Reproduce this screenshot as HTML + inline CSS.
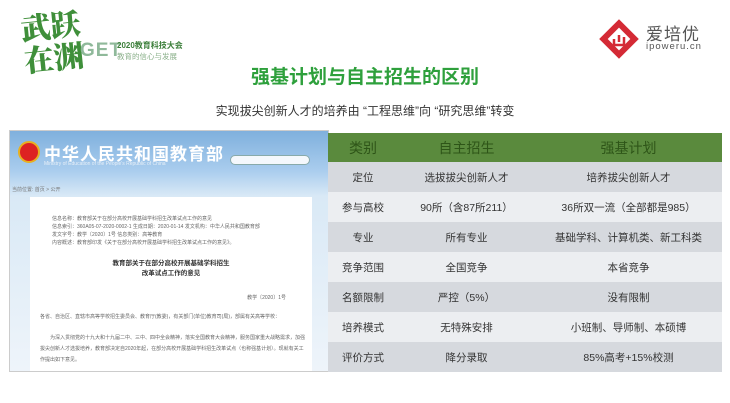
<!DOCTYPE html>
<html><head><meta charset="utf-8"><style>
*{margin:0;padding:0;box-sizing:border-box}
body{width:730px;height:403px;background:#fff;position:relative;overflow:hidden;font-family:"Liberation Sans","Noto Sans CJK SC",sans-serif}
.abs{position:absolute}
table{border-collapse:collapse;position:absolute;left:328px;top:133px;width:394px;font-size:10.5px;color:#333}
td{text-align:center;height:30px;padding:0}
tr.h td{background:#5a8a3d;color:#2e5518;font-size:14px;height:29px}
tr.d td{background:#d6d9de}
tr.l td{background:#eceef1}
</style></head><body>
<!-- logo left -->
<div class="abs" style="left:22px;top:8px;font-family:'Noto Serif CJK SC',serif;font-weight:900;color:#3f8f3a;font-size:30px;line-height:32px;transform:rotate(-6deg)">武跃<br>在渊</div>
<div class="abs" style="left:80px;top:40px;font-weight:bold;color:#8fb99a;font-size:19px;letter-spacing:1px">GET</div>
<div class="abs" style="left:117px;top:40px;font-size:8px;color:#3c7f3a;font-weight:bold">2020教育科技大会</div>
<div class="abs" style="left:117px;top:51px;font-size:7.5px;color:#8ab08a">教育的信心与发展</div>
<!-- logo right -->
<svg class="abs" style="left:597px;top:17px" width="44" height="44" viewBox="0 0 44 44"><rect x="8" y="8" width="28" height="28" transform="rotate(45 22 22)" fill="#d42a35"/><rect x="14" y="14" width="16" height="16" transform="rotate(45 22 22)" fill="#fff"/><path d="M17 22v6h10v-8M22 18v7" stroke="#d42a35" stroke-width="2.5" fill="none"/></svg>
<div class="abs" style="left:646px;top:20px;font-size:17px;color:#555;letter-spacing:1px">爱培优</div>
<div class="abs" style="left:646px;top:41px;font-size:9.5px;color:#555;letter-spacing:1px">ipoweru.cn</div>
<!-- titles -->
<div class="abs" style="left:0;width:730px;top:62px;text-align:center;font-size:19px;font-weight:bold;color:#2ea03c">强基计划与自主招生的区别</div>
<div class="abs" style="left:0;width:730px;top:102px;text-align:center;font-size:12px;color:#333">实现拔尖创新人才的培养由 “工程思维”向 “研究思维”转变</div>
<!-- left document image -->
<div class="abs" style="left:9px;top:130px;width:320px;height:242px;border:1px solid #ccc;background:linear-gradient(#7fb0dd 0,#aacdee 40px,#d9e9f6 65px,#eef4fa 100%);overflow:hidden">
 <div class="abs" style="left:8px;top:10px;width:22px;height:22px;border-radius:50%;background:#d22;border:2px solid #e8b020"></div>
 <div class="abs" style="left:34px;top:9px;font-size:17px;font-weight:bold;color:#fff;letter-spacing:1px">中华人民共和国教育部</div>
 <div class="abs" style="left:34px;top:30px;font-size:5px;color:#e8f0f8">Ministry of Education of the People's Republic of China</div>
 <div class="abs" style="left:220px;top:24px;width:80px;height:10px;border-radius:5px;background:#f4f8fc;border:1px solid #8aa"></div>
 <div class="abs" style="left:2px;top:55px;font-size:5px;color:#777">当前位置: 首页 &gt; 公开</div>
 <div class="abs" style="left:20px;top:66px;width:282px;height:176px;background:#fff;font-size:5px;color:#666;line-height:8px">
  <div style="position:absolute;left:22px;top:18px">信息名称：教育部关于在部分高校开展基础学科招生改革试点工作的意见<br>信息索引：360A05-07-2020-0002-1 生成日期：2020-01-14 发文机构：中华人民共和国教育部<br>发文字号：教学〔2020〕1号 信息类别：高等教育<br>内容概述：教育部印发《关于在部分高校开展基础学科招生改革试点工作的意见》。</div>
  <div style="position:absolute;left:0;width:282px;top:62px;text-align:center;font-size:6.5px;color:#333;line-height:10px;font-weight:bold">教育部关于在部分高校开展基础学科招生<br>改革试点工作的意见</div>
  <div style="position:absolute;right:26px;top:97px">教学〔2020〕1号</div>
  <div style="position:absolute;left:10px;top:116px">各省、自治区、直辖市高等学校招生委员会、教育厅(教委)，有关部门(单位)教育司(局)，部属有关高等学校：</div>
  <div style="position:absolute;left:10px;top:136px;width:265px;line-height:11px">　　为深入贯彻党的十九大和十九届二中、三中、四中全会精神，落实全国教育大会精神，服务国家重大战略需求，加强拔尖创新人才选拔培养，教育部决定自2020年起，在部分高校开展基础学科招生改革试点（也称强基计划）。现就有关工作提出如下意见。</div>
 </div>
</div>
<table>
<tr class="h"><td style="width:70px">类别</td><td style="width:137px">自主招生</td><td>强基计划</td></tr>
<tr class="d"><td>定位</td><td>选拔拔尖创新人才</td><td>培养拔尖创新人才</td></tr>
<tr class="l"><td>参与高校</td><td>90所（含87所211）</td><td>36所双一流（全部都是985）</td></tr>
<tr class="d"><td>专业</td><td>所有专业</td><td>基础学科、计算机类、新工科类</td></tr>
<tr class="l"><td>竞争范围</td><td>全国竞争</td><td>本省竞争</td></tr>
<tr class="d"><td>名额限制</td><td>严控（5%）</td><td>没有限制</td></tr>
<tr class="l"><td>培养模式</td><td>无特殊安排</td><td>小班制、导师制、本硕博</td></tr>
<tr class="d"><td style="height:29px">评价方式</td><td>降分录取</td><td>85%高考+15%校测</td></tr>
</table>
</body></html>
